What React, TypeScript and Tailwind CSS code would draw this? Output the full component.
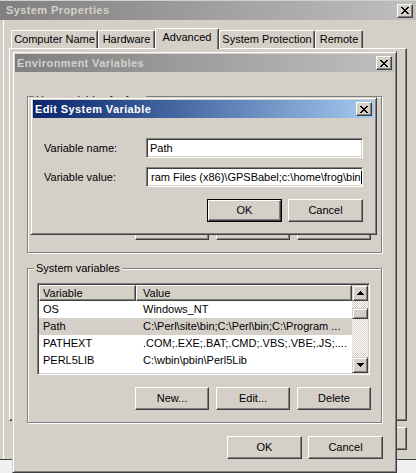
import React from "react";

const rectsX: [number, number, number][] = [
  [0, 0, 2], [6, 0, 2], [1, 1, 2], [5, 1, 2], [2, 2, 4], [3, 3, 2], [2, 4, 4], [1, 5, 2], [5, 5, 2], [0, 6, 2], [6, 6, 2],
];

function CloseGlyph() {
  return (
    <svg width="8" height="7" viewBox="0 0 8 7" shapeRendering="crispEdges">
      {rectsX.map(([x, y, w], i) => (
        <rect key={i} x={x} y={y} width={w} height={1} fill="#000" />
      ))}
    </svg>
  );
}

function CloseBtn() {
  return (
    <div className="w-[16px] h-[14px] shrink-0 flex items-center justify-center bg-[#d4d0c8] border border-t-white border-l-white border-r-[#404040] border-b-[#404040] shadow-[inset_-1px_-1px_0_#808080]">
      <CloseGlyph />
    </div>
  );
}

function Arrow({ up }: { up: boolean }) {
  const rows = up
    ? [[3, 0, 1], [2, 1, 3], [1, 2, 5], [0, 3, 7]]
    : [[0, 0, 7], [1, 1, 5], [2, 2, 3], [3, 3, 1]];
  return (
    <svg width="7" height="4" viewBox="0 0 7 4" shapeRendering="crispEdges">
      {rows.map(([x, y, w], i) => (
        <rect key={i} x={x} y={y} width={w} height={1} fill="#000" />
      ))}
    </svg>
  );
}

function Btn({ children, wide }: { children: React.ReactNode; wide?: boolean }) {
  return (
    <div
      className={
        wide
          ? "h-[23px] w-[75px] shrink-0 flex items-center justify-center bg-[#d4d0c8] border border-t-white border-l-white border-r-[#404040] border-b-[#404040] shadow-[inset_-1px_-1px_0_#808080]"
          : "h-[23px] w-[74px] shrink-0 flex items-center justify-center bg-[#d4d0c8] border border-t-white border-l-white border-r-[#404040] border-b-[#404040] shadow-[inset_-1px_-1px_0_#808080]"
      }
    >
      {children}
    </div>
  );
}

function DefaultBtn({ children }: { children: React.ReactNode }) {
  return (
    <div className="h-[23px] w-[75px] shrink-0 border border-black">
      <div className="h-full w-full flex items-center justify-center bg-[#d4d0c8] border border-t-white border-l-white border-r-[#404040] border-b-[#404040] shadow-[inset_-1px_-1px_0_#808080]">
        {children}
      </div>
    </div>
  );
}

function TitleBar({ title, active }: { title: string; active: boolean }) {
  return (
    <div
      className={
        active
          ? "h-[18px] shrink-0 flex items-center justify-between pl-[2px] pr-[2px] bg-linear-to-r from-[#0a246a] to-[#a6caf0]"
          : "h-[18px] shrink-0 flex items-center justify-between pl-[2px] pr-[2px] bg-linear-to-r from-[#808080] to-[#c0c0c0]"
      }
    >
      <span
        className={
          active
            ? "font-bold text-[11px] tracking-[0.4px] text-white leading-none"
            : "font-bold text-[11px] tracking-[0.4px] text-[#d4d0c8] leading-none"
        }
      >
        {title}
      </span>
      <CloseBtn />
    </div>
  );
}

function Tab({ label, w, active }: { label: string; w: string; active?: boolean }) {
  return (
    <div
      className={
        (active
          ? "relative z-10 h-[21px] -mb-px bg-[#d4d0c8] "
          : "h-[18px] bg-[#d4d0c8] ") +
        w +
        " shrink-0 flex items-center justify-center rounded-t-[2px] border-t border-l border-r border-t-white border-l-white border-r-[#404040] shadow-[inset_-1px_0_0_#808080] whitespace-nowrap text-[11px]"
      }
    >
      <span className={active ? "-mt-[3px]" : ""}>{label}</span>
    </div>
  );
}

const rows: [string, string][] = [
  ["OS", "Windows_NT"],
  ["Path", "C:\\Perl\\site\\bin;C:\\Perl\\bin;C:\\Program ..."],
  ["PATHEXT", ".COM;.EXE;.BAT;.CMD;.VBS;.VBE;.JS;...."],
  ["PERL5LIB", "C:\\wbin\\pbin\\Perl5Lib"],
  ["PSModulePath", "%SystemRoot%\\system32\\WindowsPowerShell\\v1.0\\..."],
];

function ScrollBtn({ up }: { up: boolean }) {
  return (
    <div className="h-[16px] w-[16px] shrink-0 flex items-center justify-center bg-[#d4d0c8] border border-t-[#d4d0c8] border-l-[#d4d0c8] border-r-[#404040] border-b-[#404040] shadow-[inset_1px_1px_0_#fff,inset_-1px_-1px_0_#808080]">
      <Arrow up={up} />
    </div>
  );
}

export default function App() {
  return (
    <div className="relative w-[416px] h-[473px] overflow-hidden bg-[#f0f0f0] font-['Liberation_Sans',Arial,sans-serif] text-[11px] leading-[13px] text-black">
      {/* System Properties window */}
      <div className="absolute left-0 top-0 w-[424px] h-[460px] bg-[#d4d0c8] border-b border-b-[#404040] flex flex-col">
        <div className="mt-[1px] h-[19px] shrink-0 flex items-center justify-between pl-[6px] pr-[11px] bg-linear-to-r from-[#808080] to-[#c0c0c0]">
          <span className="font-bold text-[11px] tracking-[0.4px] text-[#d4d0c8] leading-none">System Properties</span>
          <CloseBtn />
        </div>
        <div className="flex-1 ml-[3px] border-l border-l-white pt-[8px] flex flex-col">
          <div className="flex items-end ml-[7px] h-[20px]">
            <Tab label="Computer Name" w="w-[87px]" />
            <Tab label="Hardware" w="w-[57px]" />
            <Tab label="Advanced" w="w-[64px]" active />
            <Tab label="System Protection" w="w-[96px]" />
            <Tab label="Remote" w="w-[48px]" />
          </div>
          <div className="ml-[5px] w-[398px] h-[373px] shrink-0 bg-[#d4d0c8] border border-t-white border-l-white border-r-[#404040] border-b-[#404040] shadow-[inset_-1px_-1px_0_#808080]" />
          <div className="mt-[6px] w-[403px] flex justify-end gap-[6px]">
            <Btn wide>OK</Btn>
            <Btn wide>Cancel</Btn>
            <Btn wide>Apply</Btn>
          </div>
        </div>
      </div>

      {/* Environment Variables window */}
      <div className="absolute left-[12px] top-[51px] w-[385px] h-[422px] bg-[#d4d0c8] border border-t-[#d4d0c8] border-l-[#d4d0c8] border-r-[#404040] border-b-[#404040] shadow-[inset_1px_1px_0_#fff,inset_-1px_-1px_0_#808080] p-[2px] flex flex-col">
        <TitleBar title="Environment Variables" active={false} />
        <div className="flex flex-col px-[12px] pt-[24px]">
          <div className="relative h-[157px] shrink-0 border border-[#808080] shadow-[inset_1px_1px_0_#fff,1px_1px_0_#fff] flex flex-col justify-end pb-[12px] pr-[10px]">
            <span className="absolute -top-[3px] left-[6px] px-[2px] bg-[#d4d0c8]">User variables for frog</span>
            <div className="flex justify-end gap-[7px]">
              <Btn>New...</Btn>
              <Btn>Edit...</Btn>
              <Btn>Delete</Btn>
            </div>
          </div>

          <div className="relative mt-[15px] h-[155px] shrink-0 border border-[#808080] shadow-[inset_1px_1px_0_#fff,1px_1px_0_#fff] flex flex-col pt-[14px] pl-[9px] pr-[10px]">
            <span className="absolute -top-[7px] left-[6px] px-[2px] bg-[#d4d0c8]">System variables</span>
            <div className="w-[333px] h-[92px] shrink-0 bg-white border border-t-[#808080] border-l-[#808080] border-r-white border-b-white shadow-[inset_1px_1px_0_#404040,inset_-1px_-1px_0_#d4d0c8] p-px flex">
              <div className="w-[313px] flex flex-col overflow-hidden">
                <div className="flex h-[16px] shrink-0">
                  <div className="w-[97px] shrink-0 flex items-center pl-[3px] bg-[#d4d0c8] border border-t-white border-l-white border-r-[#404040] border-b-[#404040] shadow-[inset_-1px_-1px_0_#808080]">
                    Variable
                  </div>
                  <div className="flex-1 flex items-center pl-[6px] bg-[#d4d0c8] border border-t-white border-l-white border-r-[#404040] border-b-[#404040] shadow-[inset_-1px_-1px_0_#808080]">
                    Value
                  </div>
                </div>
                {rows.map(([k, v]) => (
                  <div
                    key={k}
                    className={
                      k === "Path"
                        ? "flex h-[17px] shrink-0 items-center bg-[#d4d0c8]"
                        : "flex h-[17px] shrink-0 items-center"
                    }
                  >
                    <div className="w-[97px] shrink-0 pl-[4px] whitespace-nowrap overflow-hidden">{k}</div>
                    <div className="flex-1 pl-[7px] whitespace-nowrap overflow-hidden">{v}</div>
                  </div>
                ))}
              </div>
              <div className="w-[16px] flex flex-col">
                <ScrollBtn up />
                <div className="flex-1 flex flex-col bg-[repeating-conic-gradient(#d4d0c8_0%_25%,#ffffff_0%_50%)] bg-size-[2px_2px]">
                  <div className="mt-[7px] h-[11px] w-[16px] bg-[#d4d0c8] border border-t-[#d4d0c8] border-l-[#d4d0c8] border-r-[#404040] border-b-[#404040] shadow-[inset_1px_1px_0_#fff,inset_-1px_-1px_0_#808080]" />
                </div>
                <ScrollBtn up={false} />
              </div>
            </div>
            <div className="mt-[12px] flex justify-end gap-[7px]">
              <Btn>New...</Btn>
              <Btn>Edit...</Btn>
              <Btn>Delete</Btn>
            </div>
          </div>

          <div className="mt-[13px] -mr-[1px] flex justify-end gap-[6px]">
            <Btn wide>OK</Btn>
            <Btn wide>Cancel</Btn>
          </div>
        </div>
      </div>

      {/* Edit System Variable dialog */}
      <div className="absolute left-[30px] top-[97px] w-[347px] h-[138px] bg-[#d4d0c8] border border-t-[#d4d0c8] border-l-[#d4d0c8] border-r-[#404040] border-b-[#404040] shadow-[inset_1px_1px_0_#fff,inset_-1px_-1px_0_#808080] p-[2px] flex flex-col">
        <TitleBar title="Edit System Variable" active />
        <div className="flex flex-col pl-[11px] pt-[20px]">
          <div className="flex items-center h-[20px]">
            <span className="w-[102px] shrink-0">Variable name:</span>
            <div className="h-[20px] w-[217px] bg-white border border-t-[#808080] border-l-[#808080] border-r-white border-b-white shadow-[inset_1px_1px_0_#404040,inset_-1px_-1px_0_#d4d0c8] flex items-center pl-[3px]">
              Path
            </div>
          </div>
          <div className="flex items-center h-[20px] mt-[9px]">
            <span className="w-[102px] shrink-0">Variable value:</span>
            <div className="h-[20px] w-[217px] bg-white border border-t-[#808080] border-l-[#808080] border-r-white border-b-white shadow-[inset_1px_1px_0_#404040,inset_-1px_-1px_0_#d4d0c8] flex items-center pl-[4px] overflow-hidden whitespace-nowrap">
              <span>ram Files (x86)\GPSBabel;c:\home\frog\bin</span>
              <span className="inline-block w-px h-[13px] bg-black shrink-0" />
            </div>
          </div>
          <div className="flex justify-end gap-[6px] mt-[12px] pr-[11px]">
            <DefaultBtn>OK</DefaultBtn>
            <Btn wide>Cancel</Btn>
          </div>
        </div>
      </div>
    </div>
  );
}
